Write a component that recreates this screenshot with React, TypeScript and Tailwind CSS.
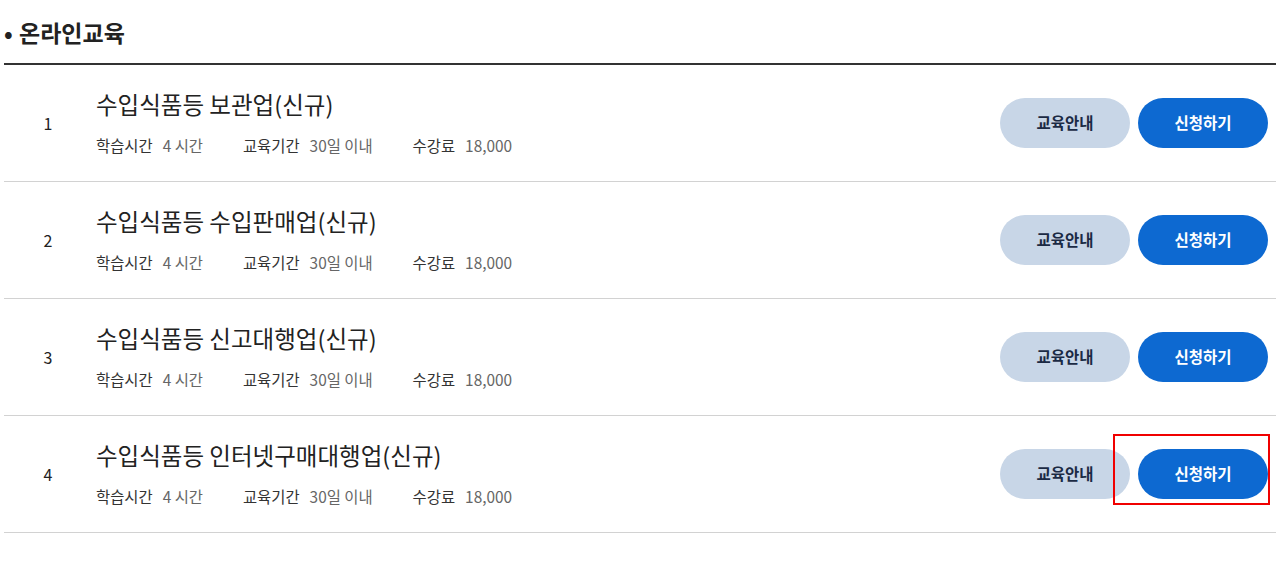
import React from "react";

const rows = [
  { no: 1, title: "수입식품등 보관업(신규)" },
  { no: 2, title: "수입식품등 수입판매업(신규)" },
  { no: 3, title: "수입식품등 신고대행업(신규)" },
  { no: 4, title: "수입식품등 인터넷구매대행업(신규)", marked: true },
];

const font = { fontFamily: '"Noto Sans CJK KR", "Noto Sans", sans-serif' };

export default function App() {
  return (
    <div className="w-[1276px] h-[569px] bg-white pl-[4px]" style={font}>
      <div className="h-[63px] flex items-center">
        <span className="text-[#222] text-[23px] font-bold leading-[32px]">
          <span className="inline-block w-[15px]">•</span>온라인교육
        </span>
      </div>
      <div className="border-t-2 border-[#333]">
        {rows.map((r) => (
          <div key={r.no} className="h-[117px] border-b border-[#d2d2d2] flex items-center">
            <div className="w-[92px] pr-[4px] flex justify-center text-[16px] text-[#222]">{r.no}</div>
            <div className="flex-1 flex flex-col justify-center pb-[3px]">
              <div className="text-[23.5px] leading-[30px] text-[#222]">{r.title}</div>
              <div className="mt-[16px] flex items-center text-[15.4px] leading-[20px] gap-[40px]">
                <div>
                  <span className="text-[#333]">학습시간</span>
                  <span className="ml-[10px] text-[#666]">4 시간</span>
                </div>
                <div>
                  <span className="text-[#333]">교육기간</span>
                  <span className="ml-[10px] text-[#666]">30일 이내</span>
                </div>
                <div>
                  <span className="text-[#333]">수강료</span>
                  <span className="ml-[10px] text-[#666]">18,000</span>
                </div>
              </div>
            </div>
            <div className="flex items-center gap-[8px] pr-[8px]">
              <button className="w-[130px] h-[50px] rounded-full bg-[#c8d6e7] text-[#1b2a44] text-[15.5px] font-bold">
                교육안내
              </button>
              <div className="relative">
                <button className="w-[130px] h-[50px] rounded-full bg-[#0d69d1] text-white text-[15.5px] font-bold">
                  신청하기
                </button>
                {r.marked && (
                  <div className="absolute left-[-25px] top-[-15px] w-[157px] h-[71px] border-2 border-[#f00000] pointer-events-none" />
                )}
              </div>
            </div>
          </div>
        ))}
      </div>
    </div>
  );
}
